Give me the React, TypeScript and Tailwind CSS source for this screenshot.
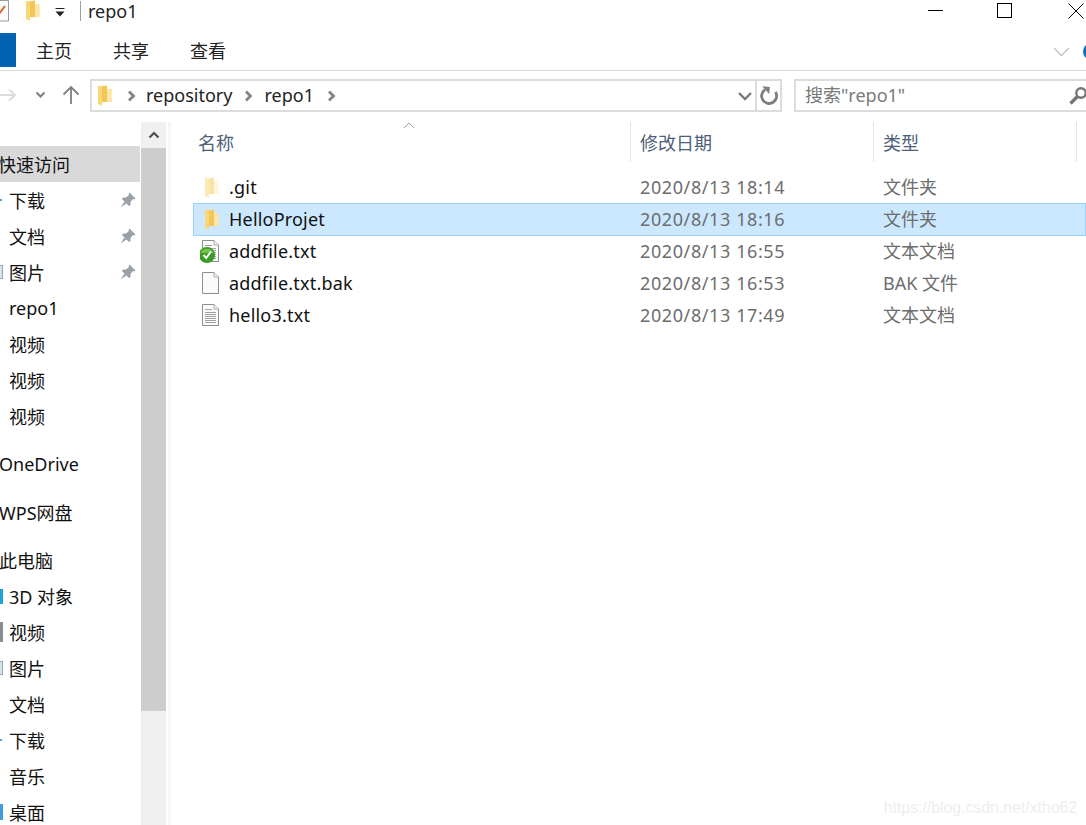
const font = '"Noto Sans","Noto Sans CJK SC",sans-serif';

function Folder({ pale = false, className = "" }: { pale?: boolean; className?: string }) {
  return (
    <svg width="15" height="21" viewBox="0 0 15 21" className={className}>
      <path d="M1 1 L10 0.5 L10 4 L14.5 4 L14.5 17 L5 17 L5 20.5 L1 19 Z" fill={pale ? "#fdf0c8" : "#fbdc8a"} />
      <path d="M1 1 L5 2 L5 20.5 L1 19 Z" fill={pale ? "#fbe9b8" : "#f9d777"} />
      <path d="M5 2 L10 0.5 L10 17 L5 17 Z" fill={pale ? "#f8e3a8" : "#f3c65a"} />
      <path d="M10 4 L14.5 4 L14.5 17 L10 17 Z" fill={pale ? "#fef6dc" : "#fde6a6"} />
    </svg>
  );
}

function Doc({ lines = true, check = false }: { lines?: boolean; check?: boolean }) {
  return (
    <svg width="22" height="24" viewBox="0 0 22 24">
      <path d="M2.5 1.5 H14 L18.5 6 V22.5 H2.5 Z" fill="#fbfbfb" stroke="#8e8e8e" />
      <path d="M14 1.5 V6 H18.5" fill="#ededed" stroke="#b0b0b0" />
      {lines && (
        <path d="M5 6.5 H12 M5 9.5 H16 M5 11.5 H16 M5 13.5 H16 M5 15.5 H16 M5 17.5 H16 M5 19.5 H16" stroke="#a0a0a0" strokeWidth="1" />
      )}
      {check && (
        <g>
          <circle cx="7" cy="16" r="8" fill="#3b9c22" />
          <path d="M0.2 14 A7.5 7.5 0 0 1 13.8 14 Z" fill="#72c34a" />
          <path d="M3.5 16 L6.2 19 L11 12.5" fill="none" stroke="#ffffff" strokeWidth="2" />
        </g>
      )}
    </svg>
  );
}

function Pin() {
  return (
    <svg width="16" height="16" viewBox="0 0 16 16">
      <path d="M9.5 0.5 L15.5 6.5 L14 7.5 L13 7 L10.5 10 L10.5 13 L9 14 L2 7 L3 5.5 L6 5.5 L9 3 L8.5 2 Z" fill="#98a1a9" />
      <path d="M4.5 9.5 L0.5 15.5 L6.5 11.5 Z" fill="#98a1a9" />
    </svg>
  );
}

function Chevron({ className = "" }: { className?: string }) {
  return (
    <svg width="9" height="12" viewBox="0 0 9 12" className={className}>
      <path d="M2 1.5 L6.5 6 L2 10.5" fill="none" stroke="#858585" strokeWidth="2.8" />
    </svg>
  );
}

type NavItem = { label: string; pin?: boolean; bit?: string; gap?: boolean; flush?: boolean; selected?: boolean; latin?: boolean };

const nav: NavItem[] = [
  { label: "快速访问", flush: true, selected: true },
  { label: "下载", pin: true, bit: "h-[2px] w-[2px] bg-[#5aa7dc]" },
  { label: "文档", pin: true },
  { label: "图片", pin: true, bit: "h-[14px] w-[3px] border-y border-r border-[#9aa5b0] bg-[#d5e3f0]" },
  { label: "repo1", latin: true },
  { label: "视频" },
  { label: "视频" },
  { label: "视频" },
  { label: "OneDrive", flush: true, gap: true, latin: true },
  { label: "WPS网盘", flush: true, gap: true },
  { label: "此电脑", flush: true, gap: true },
  { label: "3D 对象", bit: "h-[15px] w-[3px] bg-[#1fa2dc]" },
  { label: "视频", bit: "h-[20px] w-[3px] bg-[#8a8c8f]" },
  { label: "图片", bit: "h-[14px] w-[3px] border-y border-r border-[#9aa5b0] bg-[#d5e3f0]" },
  { label: "文档" },
  { label: "下载", bit: "h-[2px] w-[2px] bg-[#5aa7dc]" },
  { label: "音乐" },
  { label: "桌面", bit: "h-[16px] w-[3px] bg-[#3d9be0]" },
];

type FileItem = { name: string; date: string; type: string; icon: React.ReactNode; selected?: boolean };

const files: FileItem[] = [
  { name: ".git", date: "2020/8/13 18:14", type: "文件夹", icon: <Folder pale /> },
  { name: "HelloProjet", date: "2020/8/13 18:16", type: "文件夹", icon: <Folder />, selected: true },
  { name: "addfile.txt", date: "2020/8/13 16:55", type: "文本文档", icon: <Doc check /> },
  { name: "addfile.txt.bak", date: "2020/8/13 16:53", type: "BAK 文件", icon: <Doc lines={false} /> },
  { name: "hello3.txt", date: "2020/8/13 17:49", type: "文本文档", icon: <Doc /> },
];

export default function App() {
  return (
    <div
      className="relative flex h-[825px] w-[1086px] flex-col overflow-hidden bg-white text-[18px] text-[#111]"
      style={{ fontFamily: font }}
    >
      {/* Title bar */}
      <div className="flex h-[33px] shrink-0 items-center pb-[12px]">
        <svg width="9" height="22" viewBox="0 0 9 22" className="shrink-0">
          <path d="M-2 0.5 H8.5 V21 H-2" fill="#fafafa" stroke="#9a9a9a" />
          <path d="M-1 14 L5 6" stroke="#e0622a" strokeWidth="2" />
        </svg>
        <Folder className="ml-[16px] shrink-0" />
        <svg width="10" height="10" viewBox="0 0 10 10" className="ml-[15px] mt-[4px] shrink-0">
          <path d="M0.5 0 H9.5 V1 H0.5 Z" fill="#222" />
          <path d="M0.5 3.5 H9.5 L5 8.5 Z" fill="#222" />
        </svg>
        <div className="ml-[15px] h-[20px] w-px bg-[#9d9d9d]" />
        <span className="ml-[7px] leading-none text-[#222]">repo1</span>
        <div className="ml-auto flex items-center">
          <div className="h-px w-[15px] bg-black" />
          <div className="ml-[54px] h-[15px] w-[15px] border border-black" />
          <svg width="16" height="16" viewBox="0 0 16 16" className="ml-[56px] mr-[2px]">
            <path d="M0.5 0.5 L15.5 15.5 M15.5 0.5 L0.5 15.5" stroke="#000" strokeWidth="1" />
          </svg>
        </div>
      </div>

      {/* Ribbon tabs */}
      <div className="flex h-[38px] shrink-0 items-center border-b border-[#d9d9d9]">
        <div className="h-[34px] w-[16px] self-start bg-[#0063b1]" />
        <div className="ml-[20px] flex gap-[41px] pb-[2px] leading-none text-[#222]">
          <span>主页</span>
          <span>共享</span>
          <span>查看</span>
        </div>
        <svg width="17" height="10" viewBox="0 0 17 10" className="ml-auto mr-[13px] mt-[1px]">
          <path d="M1 1 L8.5 8.5 L16 1" fill="none" stroke="#c2c2c2" strokeWidth="1.4" />
        </svg>
        <div className="mr-[-14px] h-[17px] w-[17px] shrink-0 rounded-full bg-[#0b6fc4]" />
      </div>

      {/* Address row */}
      <div className="flex h-[51px] shrink-0 items-start pt-[8px]">
        <div className="flex h-[32px] w-[90px] shrink-0 items-center">
          <svg width="16" height="14" viewBox="0 0 16 14" className="shrink-0">
            <path d="M0 7 H15 M9 1.5 L15 7 L9 12.5" fill="none" stroke="#dcdcdc" strokeWidth="2" />
          </svg>
          <svg width="11" height="8" viewBox="0 0 11 8" className="ml-[19px] shrink-0">
            <path d="M1.5 1.5 L5.5 5.5 L9.5 1.5" fill="none" stroke="#7f7f7f" strokeWidth="2" />
          </svg>
          <svg width="18" height="20" viewBox="0 0 18 20" className="ml-[16px] shrink-0">
            <path d="M9 19 V2 M1.5 9.5 L9 2 L16.5 9.5" fill="none" stroke="#7f7f7f" strokeWidth="1.8" />
          </svg>
        </div>
        <div className="flex h-[33px] w-[692px] shrink-0 items-center border-2 border-[#dcdcdc]">
          <Folder className="ml-[5px] shrink-0" />
          <Chevron className="ml-[15px] shrink-0" />
          <span className="ml-[10px] pb-[2px] leading-none text-[#222]">repository</span>
          <Chevron className="ml-[12px] shrink-0" />
          <span className="ml-[11px] pb-[2px] leading-none text-[#222]">repo1</span>
          <Chevron className="ml-[13px] shrink-0" />
          <svg width="16" height="10" viewBox="0 0 16 10" className="ml-auto mr-[2px] shrink-0">
            <path d="M2 2 L8 8 L14 2" fill="none" stroke="#7a7a7a" strokeWidth="2.4" />
          </svg>
          <div className="h-full w-[2px] shrink-0 bg-[#dcdcdc]" />
          <svg width="23" height="24" viewBox="0 0 23 24" className="shrink-0">
            <path d="M18.5 8 A7.5 7.5 0 1 1 8 5.7" fill="none" stroke="#7d7d7d" strokeWidth="2.8" />
            <path d="M5 2.5 H12.5 V9.5 Z" fill="#7d7d7d" transform="rotate(5 8 6)" />
          </svg>
        </div>
        <div className="ml-[12px] flex h-[33px] w-[300px] shrink-0 items-center border-2 border-[#dcdcdc] pl-[9px]">
          <span className="pb-[2px] leading-none text-[#7a7a7a]">搜索"repo1"</span>
          <svg width="22" height="22" viewBox="0 0 22 22" className="ml-auto mr-[3px] shrink-0">
            <circle cx="14" cy="8" r="4.7" fill="none" stroke="#757575" strokeWidth="2.4" />
            <path d="M10.5 11.5 L3.5 18.5" stroke="#757575" strokeWidth="3.4" />
          </svg>
        </div>
      </div>

      {/* Body */}
      <div className="flex min-h-0 flex-1">
        {/* Navigation */}
        <div className="w-[140px] shrink-0 overflow-hidden pt-[24px]">
          {nav.map((n, i) => (
            <div
              key={i}
              className={`flex h-[36px] items-center whitespace-nowrap ${n.gap ? "mt-[12px]" : ""} ${n.selected ? "bg-[#d9d9d9]" : ""}`}
            >
              {n.flush ? (
                <span className={`ml-[-1px] ${n.selected ? "ml-[-2px]" : ""} ${n.latin ? "" : "pt-[2px]"}`}>{n.label}</span>
              ) : (
                <>
                  <div className="flex h-[20px] w-[4px] shrink-0 items-center">
                    {n.bit && <div className={n.bit} />}
                  </div>
                  <span className={`ml-[5px] ${n.latin ? "" : "pt-[2px]"}`}>{n.label}</span>
                  {n.pin && (
                    <span className="ml-auto mr-[4px] flex">
                      <Pin />
                    </span>
                  )}
                </>
              )}
            </div>
          ))}
        </div>

        {/* Scrollbar */}
        <div className="ml-px flex w-[25px] shrink-0 flex-col bg-[#f0f0f0]">
          <div className="flex h-[26px] items-center justify-center">
            <svg width="12" height="8" viewBox="0 0 12 8">
              <path d="M1.5 6.5 L6 2 L10.5 6.5" fill="none" stroke="#505050" strokeWidth="2.2" />
            </svg>
          </div>
          <div className="h-[563px] bg-[#cdcdcd]" />
        </div>
        <div className="ml-[2px] w-[3px] shrink-0 bg-[#f6f6f6]" />

        {/* File list */}
        <div className="relative min-w-0 flex-1 pl-[22px]">
          <div className="flex h-[40px] text-[#4c607a]">
            <div className="flex w-[437px] shrink-0 items-center pl-[5px] pt-[2px]">名称</div>
            <div className="flex w-[243px] shrink-0 items-center border-l border-[#e5e5e5] pl-[9px] pt-[2px]">修改日期</div>
            <div className="flex w-[204px] shrink-0 items-center border-x border-[#e5e5e5] pl-[9px] pt-[2px]">类型</div>
          </div>
          <svg width="12" height="7" viewBox="0 0 12 7" className="absolute left-[232px] top-0">
            <path d="M1 6 L6 1 L11 6" fill="none" stroke="#a0a0a0" strokeWidth="1" />
          </svg>
          <div className="mt-[9px]">
            {files.map((f) => (
              <div
                key={f.name}
                className={`flex items-center whitespace-nowrap ${f.selected ? "h-[33px] bg-[#cce8ff] shadow-[inset_0_0_0_1px_#99d1ff]" : "h-[32px]"} ${f.name === "addfile.txt" ? "-mt-px" : ""}`}
              >
                <div className="flex w-[36px] shrink-0 items-center justify-center">{f.icon}</div>
                <span className="w-[402px] shrink-0 tracking-[0.2px] text-[#111]">{f.name}</span>
                <span className="w-[243px] shrink-0 pl-[9px] tracking-[0.6px] text-[#6d6d6d]">{f.date}</span>
                <span className="pl-[9px] text-[#6d6d6d]">{f.type}</span>
              </div>
            ))}
          </div>
        </div>
      </div>

      {/* Watermark */}
      <span
        className="absolute bottom-[9px] right-[9px] text-[15.8px] leading-none text-[#eeeeee]"
        style={{ fontFamily: '"Liberation Sans",sans-serif' }}
      >
        https://blog.csdn.net/xtho62
      </span>
    </div>
  );
}
